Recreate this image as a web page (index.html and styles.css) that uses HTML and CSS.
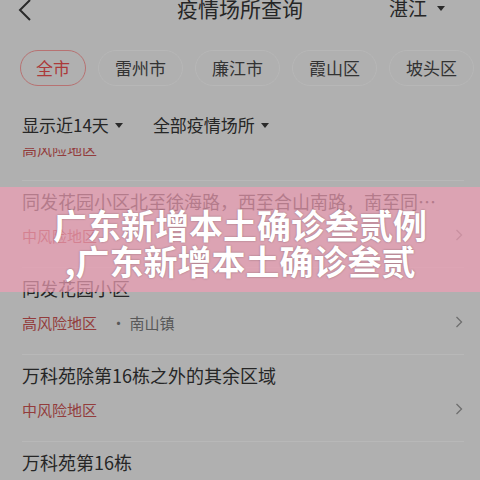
FILE: index.html
```html
<!DOCTYPE html>
<html lang="zh-CN">
<head>
    <meta charset="UTF-8">
    <meta name="viewport" content="width=device-width, initial-scale=1.0">
    <title>疫情场所查询</title>
    <link rel="stylesheet" href="styles.css">
</head>
<body>
    <div class="header">
        <svg class="back" width="16" height="22" viewBox="0 0 16 22"><polyline points="13,1 3,11 13,21" fill="none" stroke="#2a2a2a" stroke-width="2"/></svg>
        <h2 class="title">疫情场所查询</h2>
        <span class="city">湛江<i class="tri"></i></span>
    </div>

    <div class="chips">
        <span class="chip active">全市</span>
        <span class="chip">雷州市</span>
        <span class="chip">廉江市</span>
        <span class="chip">霞山区</span>
        <span class="chip">坡头区</span>
    </div>

    <div class="filters">
        <span class="filter">显示近14天 <i class="tri"></i></span>
        <span class="filter">全部疫情场所 <i class="tri"></i></span>
    </div>

    <div class="list">
        <div class="item clipped">
            <p class="name">同发花园小区</p>
            <p class="meta"><span class="risk">高风险地区</span></p>
        </div>
        <div class="item">
            <p class="name">同发花园小区北至徐海路，西至合山南路，南至同发花园小区东侧</p>
            <p class="meta"><span class="risk">中风险地区</span></p>
            <svg class="arrow" width="8" height="12" viewBox="0 0 8 12"><polyline points="1.5,1 6.5,6 1.5,11" fill="none" stroke="#6e6e6e" stroke-width="1.3"/></svg>
        </div>
        <div class="item">
            <p class="name">同发花园小区</p>
            <p class="meta"><span class="risk">高风险地区</span><span class="town">· 南山镇</span></p>
            <svg class="arrow" width="8" height="12" viewBox="0 0 8 12"><polyline points="1.5,1 6.5,6 1.5,11" fill="none" stroke="#6e6e6e" stroke-width="1.3"/></svg>
        </div>
        <div class="item">
            <p class="name">万科苑除第16栋之外的其余区域</p>
            <p class="meta"><span class="risk">中风险地区</span></p>
            <svg class="arrow" width="8" height="12" viewBox="0 0 8 12"><polyline points="1.5,1 6.5,6 1.5,11" fill="none" stroke="#6e6e6e" stroke-width="1.3"/></svg>
        </div>
        <div class="item">
            <p class="name">万科苑第16栋</p>
            <p class="meta"><span class="risk">中风险地区</span></p>
        </div>
    </div>

    <!-- headline banner over the list -->
    <div class="banner">
        <h1>广东新增本土确诊叁贰例<br>,广东新增本土确诊叁贰</h1>
    </div>
</body>
</html>
```

FILE: styles.css
```css
body {
    margin: 0;
    background: #b0b0b0;
    font-family: "Noto Sans CJK SC", "Noto Sans", sans-serif;
    color: #262626;
    height: 480px;
    overflow: hidden;
}

p, h1, h2 {
    margin: 0;
}

.header {
    height: 20px;
    margin-top: -2px;
    display: flex;
    align-items: center;
    justify-content: center;
    position: relative;
}

.back {
    position: absolute;
    left: 17px;
    top: 1px;
}

.title {
    font-size: 21px;
    font-weight: normal;
    line-height: 20px;
}

.city {
    position: absolute;
    right: 35px;
    top: 0;
    font-size: 19px;
    line-height: 20px;
    display: flex;
    align-items: center;
    gap: 10px;
}

.tri {
    display: inline-block;
    width: 0;
    height: 0;
    border-left: 4px solid transparent;
    border-right: 4px solid transparent;
    border-top: 5px solid #2a2a2a;
}

.chips {
    display: flex;
    gap: 12px;
    margin: 32px 0 0 20px;
}

.chip {
    height: 34px;
    line-height: 34px;
    padding: 0 16px;
    border: 1px solid #b7b7b7;
    border-radius: 18px;
    font-size: 17px;
    color: #333;
    white-space: nowrap;
}

.chip.active {
    border-color: #b77272;
    color: #ab3a3a;
    padding: 0 15px;
}

.filters {
    display: flex;
    gap: 30px;
    margin-top: 27px;
    padding: 0 0 11px 22px;
    line-height: 24px;
    font-size: 17px;
}

.filter {
    display: flex;
    align-items: center;
    gap: 6px;
}

.list {
    overflow: hidden;
}

.item {
    position: relative;
    margin: 0 16px 0 22px;
    padding: 8px 0 21px;
    border-bottom: 1px solid #b8b8b8;
}

.item.clipped {
    margin-top: -54px;
}

.name {
    font-size: 18px;
    line-height: 24px;
    white-space: nowrap;
    overflow: hidden;
    text-overflow: ellipsis;
    padding-right: 16px;
}

.meta {
    margin-top: 13px;
    font-size: 15px;
    line-height: 20px;
}

.risk {
    color: #933c3c;
}

.town {
    color: #585858;
    margin-left: 14px;
}

.arrow {
    position: absolute;
    right: 1px;
    top: 48px;
}

.banner {
    position: absolute;
    left: 0;
    right: 0;
    top: 187px;
    height: 105px;
    background: rgba(238, 158, 180, 0.71);
    display: flex;
    align-items: center;
    justify-content: center;
    padding-top: 6px;
    box-sizing: border-box;
}

.banner h1 {
    color: #fff;
    font-size: 34px;
    font-weight: bold;
    line-height: 36px;
    text-align: center;
    text-shadow: 0 0 2px rgba(0, 0, 0, 0.35);
}
```
